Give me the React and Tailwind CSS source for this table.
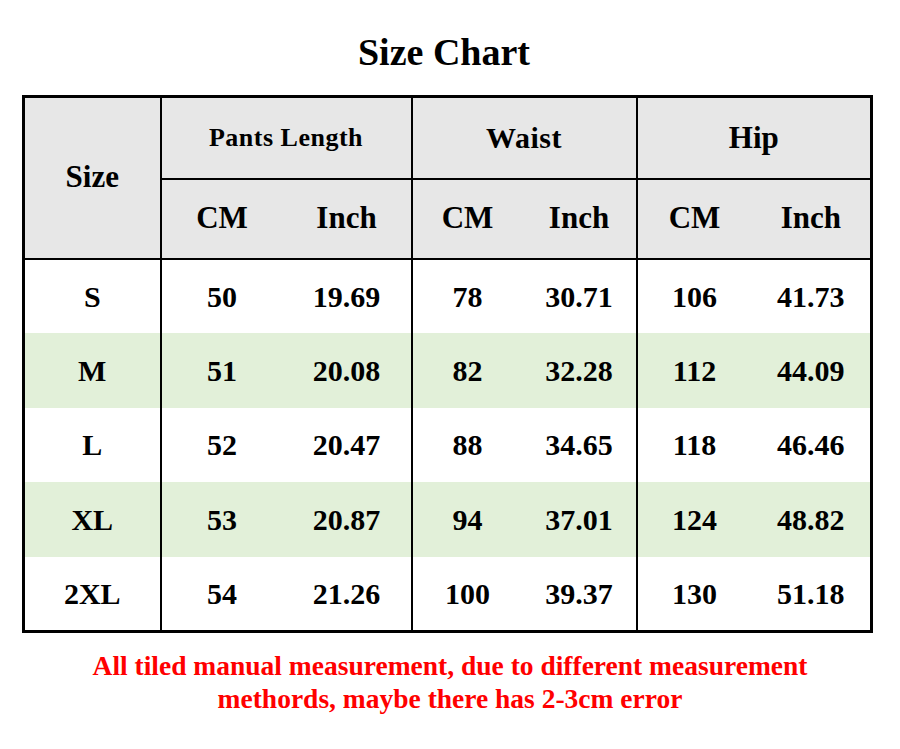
const rows = [
  ["S", "50", "19.69", "78", "30.71", "106", "41.73"],
  ["M", "51", "20.08", "82", "32.28", "112", "44.09"],
  ["L", "52", "20.47", "88", "34.65", "118", "46.46"],
  ["XL", "53", "20.87", "94", "37.01", "124", "48.82"],
  ["2XL", "54", "21.26", "100", "39.37", "130", "51.18"],
];

export default function App() {
  return (
    <div className="w-[900px] h-[749px] bg-white font-['Liberation_Serif',_serif] font-bold text-black">
      <h1 className="pt-[28px] pr-[12px] h-[95px] text-center text-[38px] leading-[48px]">Size Chart</h1>

      <table className="ml-[22px] w-[848px] border-collapse border-[3px] border-black table-fixed text-center">
        <colgroup>
          <col className="w-[137px]" />
          <col className="w-[122px]" />
          <col className="w-[129px]" />
          <col className="w-[111px]" />
          <col className="w-[114px]" />
          <col className="w-[115px]" />
          <col className="w-[120px]" />
        </colgroup>
        <thead className="bg-[#e7e7e7]">
          <tr className="h-[82px]">
            <th rowSpan={2} className="border-2 border-black text-[31px] pb-[2px]">Size</th>
            <th colSpan={2} className="border-2 border-black text-[26px] tracking-[0.5px]">Pants Length</th>
            <th colSpan={2} className="border-2 border-black text-[30px] tracking-[0.5px]">Waist</th>
            <th colSpan={2} className="border-2 border-black text-[31px]">Hip</th>
          </tr>
          <tr className="h-[80px] text-[31px]">
            <th className="border-y-2 border-l-2 border-black">CM</th>
            <th className="border-y-2 border-r-2 border-black">Inch</th>
            <th className="border-y-2 border-l-2 border-black">CM</th>
            <th className="border-y-2 border-r-2 border-black">Inch</th>
            <th className="border-y-2 border-l-2 border-black">CM</th>
            <th className="border-y-2 border-r-2 border-black">Inch</th>
          </tr>
        </thead>
        <tbody className="text-[30px]">
          {rows.map((r, i) => (
            <tr key={r[0]} className={`h-[74.5px] ${i % 2 === 1 ? "bg-[#e2f0d9]" : "bg-white"}`}>
              <td className="border-r-2 border-black">{r[0]}</td>
              <td>{r[1]}</td>
              <td className="border-r-2 border-black">{r[2]}</td>
              <td>{r[3]}</td>
              <td className="border-r-2 border-black">{r[4]}</td>
              <td>{r[5]}</td>
              <td>{r[6]}</td>
            </tr>
          ))}
        </tbody>
      </table>

      <p className="mt-[16px] text-center text-[#ff0000] text-[27.5px] leading-[33px]">
        All tiled manual measurement, due to different measurement
        <br />
        methords, maybe there has 2-3cm error
      </p>
    </div>
  );
}
